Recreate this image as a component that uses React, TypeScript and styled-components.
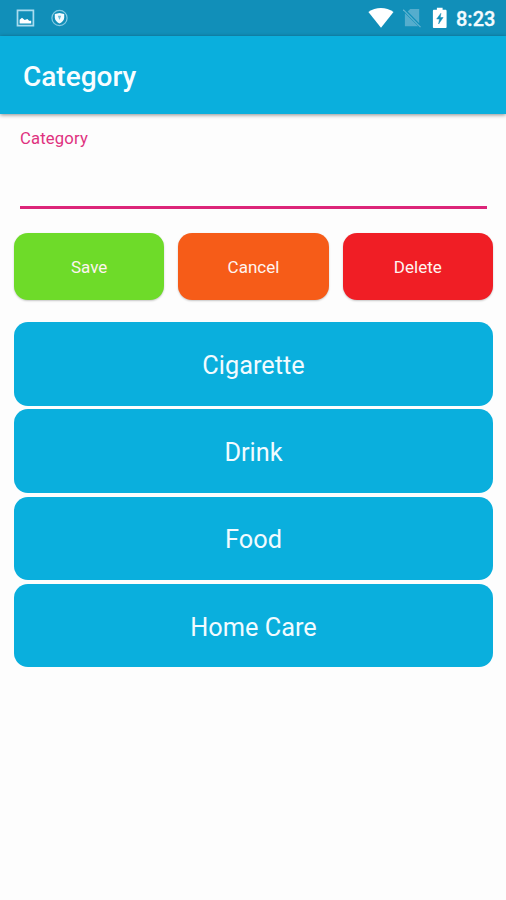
import React from "react";
import styled, { createGlobalStyle } from "styled-components";

const GlobalStyle = createGlobalStyle`
  * { box-sizing: border-box; }
  body { margin: 0; background: #fdfdfd; font-family: Roboto, sans-serif; }
`;

const Screen = styled.div`
  display: flex;
  flex-direction: column;
  width: 506px;
  height: 900px;
  overflow: hidden;
  background: #fdfdfd;
`;

const StatusBar = styled.div`
  display: flex;
  align-items: center;
  justify-content: space-between;
  height: 36px;
  padding: 0 11px 0 16px;
  background: #118fb9;
  color: #f4fbfe;
`;

const StatusGroup = styled.div<{ $gap: number }>`
  display: flex;
  align-items: center;
  gap: ${(p) => p.$gap}px;
  svg { display: block; }
`;

const Clock = styled.span`
  font-size: 20px;
  font-weight: 500;
  line-height: 24px;
  width: 39px;
  margin-top: 2px;
  white-space: nowrap;
  -webkit-text-stroke: 0.3px currentColor;
`;

const AppBar = styled.header`
  display: flex;
  align-items: center;
  height: 78px;
  padding: 4px 23px 0;
  background: #0aafdd;
  box-shadow: 0 1px 4px rgba(0, 0, 0, 0.45);
`;

const Title = styled.h1`
  margin: 0;
  color: #f8fdff;
  font-size: 28px;
  font-weight: 500;
  line-height: 36px;
`;

const Field = styled.label`
  display: flex;
  flex-direction: column;
  height: 95px;
  margin: 0 19px 0 20px;
  padding-top: 15px;
  border-bottom: 3px solid #dc2579;
`;

const FieldLabel = styled.span`
  color: #df3280;
  font-size: 16.7px;
  line-height: 20px;
  letter-spacing: 0.15px;
`;

const Actions = styled.div`
  display: grid;
  grid-template-columns: repeat(3, 1fr);
  gap: 14px;
  height: 67px;
  margin: 24px 13px 0 14px;
`;

const ActionButton = styled.button<{ $color: string }>`
  border: 0;
  border-radius: 14px;
  padding: 1px 0 0;
  background: ${(p) => p.$color};
  box-shadow: 0 1px 2px rgba(0, 0, 0, 0.22);
  color: #fff4f0;
  font: 400 17px/20px Roboto, sans-serif;
`;

const CategoryList = styled.div`
  display: flex;
  flex-direction: column;
  gap: 3.8px;
  margin: 22px 13px 0 14px;
`;

const CategoryButton = styled.button`
  height: 83.5px;
  border: 0;
  border-radius: 14px;
  padding: 4px 0 0;
  background: #0aafdd;
  color: #f2fbff;
  font: 400 25.3px/32px Roboto, sans-serif;
`;

const ImageIcon = () => (
  <svg width="19" height="18" viewBox="0 0 19 18">
    <path d="M1.5 1.3H17.4V16.7H1.5Z" fill="none" stroke="#a9dcef" strokeWidth="1.7" />
    <path d="M3.6 14.4V10.7L6 8.7L8.7 11.1L11.4 9.9L13.1 11.8H15.2V14.4Z" fill="#fff" />
  </svg>
);

const ShieldIcon = () => (
  <svg width="18" height="18" viewBox="0 0 18 18">
    <circle cx="9.5" cy="9" r="7.6" fill="none" stroke="#85c9e2" strokeWidth="1.2" />
    <path d="M9.5 3.9L14.2 5.1V8.5C14.2 11.2 12.1 13.4 9.5 14.4C6.9 13.4 4.8 11.2 4.8 8.5V5.1Z" fill="#f2fbff" />
    <path d="M7.8 6.7H11.2L9.5 10.9Z" fill="#69b9d6" />
  </svg>
);

const WifiIcon = () => (
  <svg width="26" height="22" viewBox="0 0 26 22">
    <path d="M0.4 5.1C7.5 -0.4 18.2 -0.4 25.5 5.1L13 20.8Z" fill="#fff" />
  </svg>
);

const NoSimIcon = () => (
  <svg width="20" height="22" viewBox="0 0 20 22">
    <path d="M7.2 2H16.2V16.2L4.7 4.6ZM1.9 6.2L15.2 19.2H1.9Z" fill="#55adcd" />
    <path d="M0.2 2.7L17.5 20.2" stroke="#62b5d2" strokeWidth="1.2" />
  </svg>
);

const BatteryIcon = () => (
  <svg width="15" height="22" viewBox="0 0 15 22">
    <path d="M4.9 0.7H10.6V2.7H13.4C14.1 2.7 14.6 3.2 14.6 3.9V19.9C14.6 20.6 14.1 21.1 13.4 21.1H2.1C1.4 21.1 0.9 20.6 0.9 19.9V3.9C0.9 3.2 1.4 2.7 2.1 2.7H4.9Z" fill="#fff" />
    <path d="M8.9 6.3L4.7 12H7.5L6.6 17L11.1 10.5H8.2Z" fill="#118fb9" stroke="#118fb9" strokeWidth="0.5" />
  </svg>
);

const actions = [
  { label: "Save", color: "#6edb29" },
  { label: "Cancel", color: "#f65c18" },
  { label: "Delete", color: "#f01e25" },
];

const categories = ["Cigarette", "Drink", "Food", "Home Care"];

export default function App() {
  return (
    <>
      <GlobalStyle />
      <Screen>
        <StatusBar>
          <StatusGroup $gap={15}>
            <ImageIcon />
            <ShieldIcon />
          </StatusGroup>
          <StatusGroup $gap={9}>
            <WifiIcon />
            <NoSimIcon />
            <BatteryIcon />
            <Clock>8:23</Clock>
          </StatusGroup>
        </StatusBar>
        <AppBar>
          <Title>Category</Title>
        </AppBar>
        <Field>
          <FieldLabel>Category</FieldLabel>
        </Field>
        <Actions>
          {actions.map((a) => (
            <ActionButton key={a.label} $color={a.color}>{a.label}</ActionButton>
          ))}
        </Actions>
        <CategoryList>
          {categories.map((name) => (
            <CategoryButton key={name}>{name}</CategoryButton>
          ))}
        </CategoryList>
      </Screen>
    </>
  );
}
